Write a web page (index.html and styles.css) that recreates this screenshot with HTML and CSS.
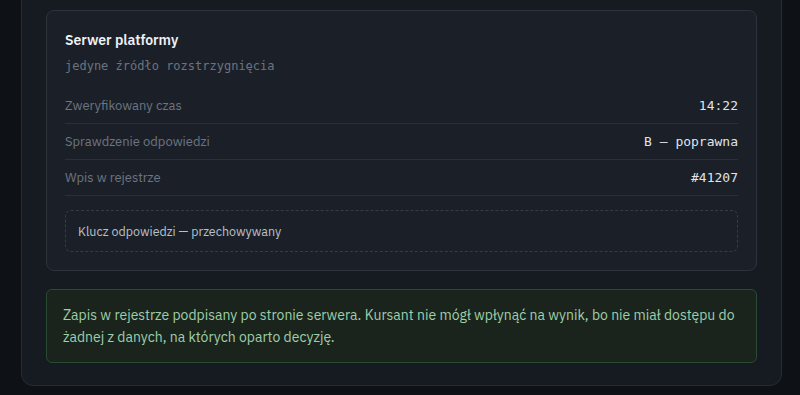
FILE: index.html
```html
<!DOCTYPE html>
<html lang="pl">
<head>
<meta charset="utf-8">
<link rel="stylesheet" href="styles.css">
</head>
<body>
<section class="panel">
  <div class="card">
    <h2 class="card-title">Serwer platformy</h2>
    <p class="card-sub">jedyne źródło rozstrzygnięcia</p>
    <dl class="rows">
      <div class="row"><dt>Zweryfikowany czas</dt><dd>14:22</dd></div>
      <div class="row"><dt>Sprawdzenie odpowiedzi</dt><dd>B — poprawna</dd></div>
      <div class="row"><dt>Wpis w rejestrze</dt><dd>#41207</dd></div>
    </dl>
    <div class="keybox">Klucz odpowiedzi — przechowywany</div>
  </div>
  <div class="callout">Zapis w rejestrze podpisany po stronie serwera. Kursant nie mógł wpłynąć na wynik, bo nie miał dostępu do żadnej z danych, na których oparto decyzję.</div>
</section>
</body>
</html>
```

FILE: styles.css
```css
* { box-sizing: border-box; }
html, body { margin: 0; padding: 0; }
body {
  background: #0e1116;
  font-family: "IBM Plex Sans", Inter, "Noto Sans", sans-serif;
  height: 395px;
  overflow: hidden;
}
.panel {
  margin: -15px 18px 0 21px;
  background: #161a21;
  border: 1px solid #262c36;
  border-radius: 12px;
  padding: 24px 24px 22px;
  display: flex;
  flex-direction: column;
  gap: 18px;
}
.card {
  background: #1b2028;
  border: 1px solid #2d333d;
  border-radius: 8px;
  padding: 19px 18px 18px;
}
.card-title {
  margin: 0;
  font-size: 14px;
  line-height: 20px;
  font-weight: 600;
  color: #eef1f5;
}
.card-sub {
  margin: 7px 0 0;
  font-family: "DejaVu Sans Mono", monospace;
  font-size: 12px;
  line-height: 18px;
  color: #6b7380;
}
.rows { margin: 13px 0 0; }
.row {
  display: flex;
  justify-content: space-between;
  align-items: center;
  padding: 8px 0;
  line-height: 19px;
  border-bottom: 1px solid #2a303a;
}
.row dt {
  font-size: 13px;
  color: #6d7582;
}
.row dd {
  margin: 0;
  font-family: "DejaVu Sans Mono", monospace;
  font-size: 13px;
  color: #dfe4ea;
}
.keybox {
  margin-top: 14px;
  border: 1px dashed #353c47;
  border-radius: 6px;
  padding: 12px;
  font-size: 12.5px;
  line-height: 16px;
  color: #b9c0ca;
}
.callout {
  background: #1a241d;
  border: 1px solid #2b4a33;
  border-radius: 6px;
  padding: 14px 16px;
  font-size: 14px;
  line-height: 22px;
  color: #9fcfa9;
}
```
